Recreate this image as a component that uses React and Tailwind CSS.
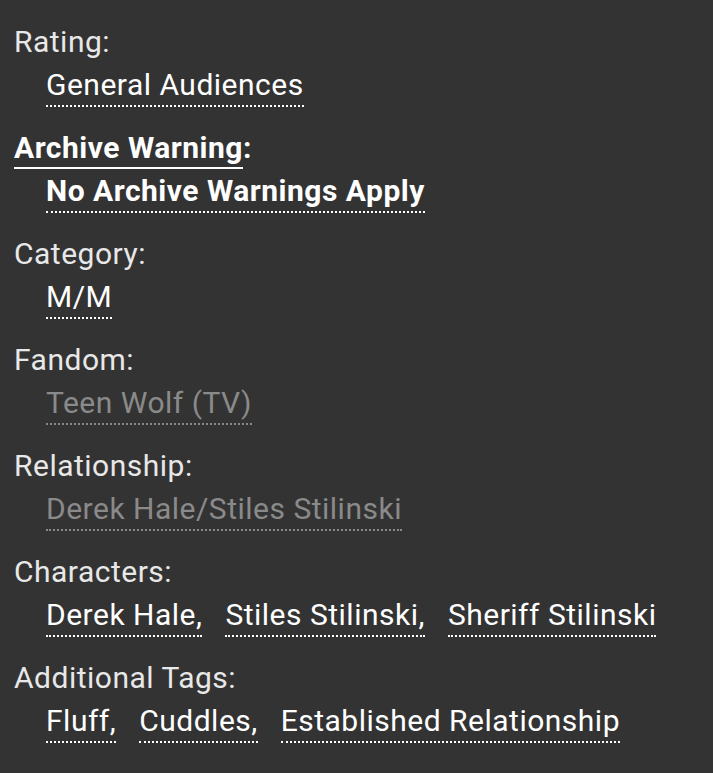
import React from "react";

const sections = [
  { label: "Rating", tags: [{ name: "General Audiences" }] },
  { label: "Archive Warning", bold: true, tags: [{ name: "No Archive Warnings Apply" }] },
  { label: "Category", tags: [{ name: "M/M" }] },
  { label: "Fandom", tags: [{ name: "Teen Wolf (TV)", muted: true }] },
  { label: "Relationship", tags: [{ name: "Derek Hale/Stiles Stilinski", muted: true }] },
  {
    label: "Characters",
    tags: [{ name: "Derek Hale" }, { name: "Stiles Stilinski" }, { name: "Sheriff Stilinski" }],
  },
  {
    label: "Additional Tags",
    tags: [{ name: "Fluff" }, { name: "Cuddles" }, { name: "Established Relationship" }],
  },
];

const App = () => {
  return (
    <div
      className="min-h-[773px] bg-[#333333] pl-[14px] pt-[20px] text-[30px] leading-[43px] tracking-[0.5px]"
      style={{ fontFamily: "Roboto, 'Liberation Sans', sans-serif" }}
    >
      {sections.map((s, i) => (
        <dl key={i} className="mb-[20px]">
          {/* LABEL */}
          <dt className={s.bold ? "font-bold text-white" : "text-[#e8e8e8]"}>
            {s.bold ? (
              <>
                <span className="border-b-2 border-white pb-[2px]">{s.label}</span>:
              </>
            ) : (
              <>{s.label}:</>
            )}
          </dt>

          {/* TAGS */}
          <dd className="pl-[32px] flex">
            {s.tags.map((t, j) => (
              <span key={j} className="mr-[23px]">
                <span
                  className={`border-b-2 border-dotted pb-[3px] ${
                    t.muted ? "text-[#8a8a8a] border-[#8a8a8a]" : "text-white border-white"
                  } ${s.bold ? "font-bold" : ""}`}
                >
                  {t.name}
                  {j < s.tags.length - 1 ? "," : ""}
                </span>
              </span>
            ))}
          </dd>
        </dl>
      ))}
    </div>
  );
};

export default App;
